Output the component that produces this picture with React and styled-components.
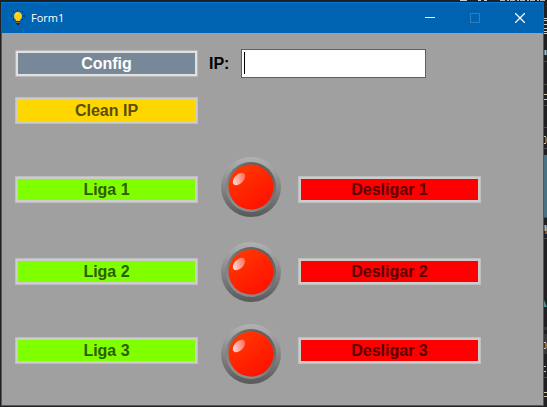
import React, { useState } from "react";
import styled, { createGlobalStyle } from "styled-components";

const GlobalStyle = createGlobalStyle`
  * { box-sizing: border-box; }
  body { margin: 0; background: #202023; }
`;

const Desktop = styled.div`
  display: grid;
  grid-template-columns: 1fr 3px;
  grid-template-rows: 2px 1fr;
  min-height: 100vh;
  padding: 0 0 1px 1px;
  overflow: hidden;
`;

const TopEdge = styled.svg`
  grid-column: 1 / -1;
  justify-self: end;
  display: block;
`;

const RightEdge = styled.svg`
  display: block;
`;

const Window = styled.main`
  display: flex;
  flex-direction: column;
  border: 1px solid #1b66a6;
  border-top-color: #0078d7;
  background: #a0a0a0;
  font-family: "Liberation Sans", Arial, sans-serif;
`;

const TitleBar = styled.header`
  display: flex;
  align-items: center;
  height: 30px;
  padding: 0 1px 0 9px;
  background: #0063b1;
  color: #fff;
`;

const Title = styled.h1`
  flex: 1;
  margin: 0 0 0 6px;
  font: 400 11px/16px "Open Sans", "Noto Sans", sans-serif;
`;

const WindowButton = styled.button`
  display: grid;
  place-items: center;
  width: 45px;
  height: 30px;
  padding: 0;
  border: 0;
  background: transparent;
  color: ${(p) => (p.disabled ? "#3380c0" : "#fff")};
`;

const Form = styled.form`
  display: flex;
  flex-direction: column;
  padding: 16px 13px;
`;

const FieldRow = styled.div`
  display: flex;
  align-items: center;
`;

const tones = {
  slate: { face: "#778899", text: "#ffffff", edge: "#e1e1e1", rim: "#b8b8b8" },
  gold: { face: "#ffd700", text: "#5c4d00", edge: "#cccccc", rim: "#bfbfbf" },
  green: { face: "#80ff00", text: "#2e5c00", edge: "#cccccc", rim: "#bfbfbf" },
  red: { face: "#ff0000", text: "#5c0000", edge: "#cccccc", rim: "#bfbfbf" },
};

const FormButton = styled.button`
  width: 183px;
  height: 27px;
  padding: 0;
  border: 1px solid ${(p) => tones[p.$tone].rim};
  box-shadow: inset 0 0 0 2px ${(p) => tones[p.$tone].edge};
  background: ${(p) => tones[p.$tone].face};
  color: ${(p) => tones[p.$tone].text};
  font: 700 16px/24px "Liberation Sans", Arial, sans-serif;
`;

const Label = styled.label`
  width: 32px;
  margin-left: 11px;
  color: #000;
  font: 700 16px/24px "Liberation Sans", Arial, sans-serif;
`;

const InputFrame = styled.div`
  position: relative;
  width: 185px;
`;

const TextInput = styled.input`
  display: block;
  width: 100%;
  height: 29px;
  padding: 0 2px;
  border: 1px solid #0078d7;
  border-radius: 0;
  outline: 0;
  background: #fff;
  color: #000;
  caret-color: ${(p) => (p.value ? "#000" : "transparent")};
  font: 700 16px/24px "Liberation Sans", Arial, sans-serif;
`;

const Caret = styled.span`
  position: absolute;
  left: 3px;
  top: 3px;
  width: 1px;
  height: 22px;
  background: #000;
  pointer-events: none;
`;

const CleanRow = styled.div`
  display: flex;
  margin-top: 19px;
`;

const Channels = styled.section`
  display: flex;
  align-items: flex-start;
  margin-top: 33px;
`;

const ButtonColumn = styled.div`
  display: grid;
  grid-template-rows: 82px 79px 27px;
  margin-top: 19px;
`;

const LampColumn = styled.div`
  display: grid;
  grid-template-rows: 85px 82px 60px;
  margin: 0 17px 0 23px;
`;

const LampIcon = styled.svg`
  display: block;
  width: 60px;
  height: 60px;
`;

function Bulb() {
  return (
    <svg width="14" height="16" viewBox="0 0 14 16" aria-hidden="true">
      <path d="M2 1l1 1M6.500 0v1M12 1l-1 1M0 6h1M12 6h2M2 10l1-1M11 9l1 1" stroke="#12263a" fill="none" />
      <path d="M7 2C4.500 2 3 3.800 3 6c0 2 1 3 2 4v1.500h4V10c1-1 2-2 2-4 0-2.200-1.500-4-4-4z" fill="#ffcd16" />
      <path d="M4.500 4.500C5 3.500 6 3 7 3" stroke="#fff06a" fill="none" />
      <path d="M5 11h4v3H8v1H6v-1H5z" fill="#302431" />
      <path d="M5 12.500h4" stroke="#826b6b" />
    </svg>
  );
}

function Lamp({ id }) {
  return (
    <LampIcon viewBox="0 0 60 60" role="img" aria-label={`Lamp ${id}`}>
      <defs>
        <linearGradient id={`rim${id}`} x1="0" y1="0" x2="0" y2="1">
          <stop offset="0" stopColor="#b2b2b2" />
          <stop offset="1" stopColor="#595959" />
        </linearGradient>
        <linearGradient id={`ring${id}`} x1="0.800" y1="0.100" x2="0.200" y2="0.900">
          <stop offset="0" stopColor="#606060" />
          <stop offset="1" stopColor="#8e8e8e" />
        </linearGradient>
        <linearGradient id={`red${id}`} x1="0.100" y1="0" x2="0.800" y2="1">
          <stop offset="0" stopColor="#ff3c00" />
          <stop offset="1" stopColor="#ff0f00" />
        </linearGradient>
        <linearGradient id={`shine${id}`} x1="0" y1="0.200" x2="1" y2="0.600">
          <stop offset="0" stopColor="#ffe5e5" />
          <stop offset="1" stopColor="#ff6b58" />
        </linearGradient>
      </defs>
      <circle cx="30" cy="30" r="30" fill={`url(#rim${id})`} />
      <circle cx="30" cy="30" r="25" fill={`url(#ring${id})`} />
      <circle cx="30" cy="30" r="22.500" fill={`url(#red${id})`} />
      <ellipse cx="18" cy="22" rx="7.500" ry="4.500" transform="rotate(-45 18 22)" fill={`url(#shine${id})`} />
    </LampIcon>
  );
}

const channels = [1, 2, 3];

export default function App() {
  const [ip, setIp] = useState("");
  return (
    <>
      <GlobalStyle />
      <Desktop>
        <TopEdge width="100" height="2" viewBox="0 0 100 2" aria-hidden="true">
          <path d="M13 0h7M31 0h3M37 0h3" stroke="#cfcfcf" strokeWidth="2" />
          <path d="M53 0h47" stroke="#b8b8b8" strokeWidth="2" strokeDasharray="5 2 2 1" />
        </TopEdge>
        <Window>
          <TitleBar>
            <Bulb />
            <Title>Form1</Title>
            <WindowButton type="button" aria-label="Minimize">
              <svg width="10" height="10" viewBox="0 0 10 10"><path d="M0 4.500h10" stroke="currentColor" /></svg>
            </WindowButton>
            <WindowButton type="button" aria-label="Maximize" disabled>
              <svg width="10" height="10" viewBox="0 0 10 10"><path d="M.5.5h9v9h-9z" stroke="currentColor" fill="none" /></svg>
            </WindowButton>
            <WindowButton type="button" aria-label="Close">
              <svg width="10" height="10" viewBox="0 0 10 10"><path d="M0 0l10 10M10 0L0 10" stroke="currentColor" strokeWidth="1.300" /></svg>
            </WindowButton>
          </TitleBar>
          <Form onSubmit={(e) => e.preventDefault()}>
            <FieldRow>
              <FormButton type="submit" $tone="slate">Config</FormButton>
              <Label htmlFor="ip">IP:</Label>
              <InputFrame>
                <TextInput id="ip" type="text" value={ip} onChange={(e) => setIp(e.target.value)} />
                {!ip && <Caret />}
              </InputFrame>
            </FieldRow>
            <CleanRow>
              <FormButton type="button" $tone="gold" onClick={() => setIp("")}>Clean IP</FormButton>
            </CleanRow>
            <Channels>
              <ButtonColumn>
                {channels.map((n) => <FormButton key={n} type="button" $tone="green">Liga {n}</FormButton>)}
              </ButtonColumn>
              <LampColumn>
                {channels.map((n) => <Lamp key={n} id={n} />)}
              </LampColumn>
              <ButtonColumn>
                {channels.map((n) => <FormButton key={n} type="button" $tone="red">Desligar {n}</FormButton>)}
              </ButtonColumn>
            </Channels>
          </Form>
        </Window>
        <RightEdge width="3" height="404" viewBox="0 0 3 404" aria-hidden="true">
          <path d="M0 153h3v62H0z" fill="#487184" />
          <path d="M0 325h3v3H0zM0 332h3v20H0z" fill="#38383b" />
          <path d="M0 16.500h3M0 18.500h3M0 22.500h3M0 26.500h3M0 29.500h3M0 31.500h3" stroke="#cfcfcf" />
          <path d="M0 59.500h3M0 82.500h3M0 103.500h3M0 125.500h3M0 146.500h3M0 215.500h3M0 236.500h3M0 375.500h3" stroke="#4b4b4e" />
          <path d="M1.500 48v5M1.500 223v6" stroke="#9cc9dd" strokeWidth="2" />
          <path d="M0 92.500h3M0 97.500h3M0 134.500h2M0 141.500h2M0 340.500h2M0 346.500h2M0 364.500h2M0 369.500h2M0 390.500h3M0 394.500h3" stroke="#d0c3ad" />
          <path d="M2 135v6M2 225v7M2 341v5" stroke="#e09b4a" />
          <path d="M0 298l3 7H0z" fill="#4f8a9e" />
        </RightEdge>
      </Desktop>
    </>
  );
}
